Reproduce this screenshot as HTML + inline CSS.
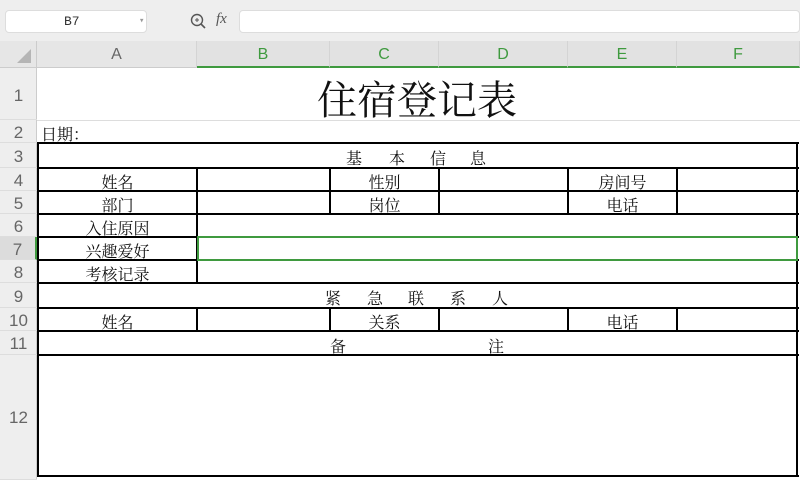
<!DOCTYPE html><html><head><meta charset="utf-8"><style>
body{margin:0;width:800px;height:480px;overflow:hidden;background:#fff;position:relative;font-family:"Liberation Sans","Noto Sans CJK SC",sans-serif}
div{position:absolute;box-sizing:border-box}
.h{height:2px;background:#000}
.v{width:2px;background:#000}
.t{font-family:"Noto Serif CJK SC","Noto Sans CJK SC",serif;font-size:16px;line-height:16px;color:#111;white-space:nowrap}
.c{text-align:center}
.rh{left:0;width:37px;text-align:center;color:#666;font-size:17px;border-bottom:1px solid #ddd}
.ch{top:41px;height:27px;line-height:27px;text-align:center;color:#666;font-size:16px;border-right:1px solid #d4d4d4}
.g{background:#e2e2e2}
</style></head><body>
<div style="left:0;top:0;width:800px;height:41px;background:#eeeeee"></div>
<div style="left:5px;top:10px;width:142px;height:23px;background:#fff;border-radius:4px;border:1px solid #ddd;font-size:13px;line-height:21px;padding-left:58px;color:#333;font-family:'Liberation Mono',monospace">B7<span style="position:absolute;left:133px;color:#999;font-size:9px">▾</span></div>
<svg style="position:absolute;left:190px;top:13px" width="18" height="18"><circle cx="7" cy="7" r="5.5" fill="none" stroke="#555" stroke-width="1.4"/><path d="M11 11l4 4" stroke="#555" stroke-width="1.6"/><path d="M5 7h4M7 5v4" stroke="#555" stroke-width="1"/></svg>
<div style="left:216px;top:11px;font-size:15px;font-style:italic;color:#555;font-family:'Liberation Serif',serif">fx</div>
<div style="left:239px;top:10px;width:561px;height:23px;background:#fff;border-radius:4px;border:1px solid #ddd"></div>
<div style="left:0;top:41px;width:800px;height:27px;background:#e6e6e6;border-bottom:1px solid #ccc"></div>
<div style="left:0;top:41px;width:37px;height:27px;border-right:1px solid #ccc"></div>
<svg style="position:absolute;left:16px;top:48px" width="16" height="16"><path d="M15 1V15H1Z" fill="#b5b5b5"/></svg>
<div class="ch" style="left:37px;width:160px">A</div>
<div class="ch g" style="left:197px;width:133px;color:#3f9a3f;border-bottom:2px solid #3f9a3f">B</div>
<div class="ch g" style="left:330px;width:109px;color:#3f9a3f;border-bottom:2px solid #3f9a3f">C</div>
<div class="ch g" style="left:439px;width:129px;color:#3f9a3f;border-bottom:2px solid #3f9a3f">D</div>
<div class="ch g" style="left:568px;width:109px;color:#3f9a3f;border-bottom:2px solid #3f9a3f">E</div>
<div class="ch g" style="left:677px;width:123px;color:#3f9a3f;border-bottom:2px solid #3f9a3f">F</div>
<div style="left:0;top:68px;width:37px;height:412px;background:#eeeeee;border-right:1px solid #ccc"></div>
<div class="rh" style="top:68px;height:52px;line-height:56px">1</div>
<div class="rh" style="top:120px;height:23px;line-height:26px">2</div>
<div class="rh" style="top:143px;height:25px;line-height:27px">3</div>
<div class="rh" style="top:168px;height:23px;line-height:26px">4</div>
<div class="rh" style="top:191px;height:23px;line-height:26px">5</div>
<div class="rh" style="top:214px;height:23px;line-height:26px">6</div>
<div class="rh" style="top:237px;height:23px;line-height:26px;background:#dcdcdc;border-right:2px solid #3f9a3f">7</div>
<div class="rh" style="top:260px;height:23px;line-height:26px">8</div>
<div class="rh" style="top:283px;height:25px;line-height:27px">9</div>
<div class="rh" style="top:308px;height:23px;line-height:26px">10</div>
<div class="rh" style="top:331px;height:24px;line-height:26px">11</div>
<div class="rh" style="top:355px;height:125px;line-height:125px">12</div>
<div style="left:37px;top:120px;width:763px;height:1px;background:#ddd"></div>
<div class="t" style="left:317px;top:77px;font-size:40px;line-height:42px">住宿登记表</div>
<div class="t" style="left:41px;top:126px">日期：</div>
<div class="h" style="left:37px;top:142px;width:762px"></div>
<div class="h" style="left:37px;top:167px;width:762px"></div>
<div class="h" style="left:37px;top:190px;width:762px"></div>
<div class="h" style="left:37px;top:213px;width:762px"></div>
<div class="h" style="left:37px;top:236px;width:762px"></div>
<div class="h" style="left:37px;top:259px;width:762px"></div>
<div class="h" style="left:37px;top:282px;width:762px"></div>
<div class="h" style="left:37px;top:307px;width:762px"></div>
<div class="h" style="left:37px;top:330px;width:762px"></div>
<div class="h" style="left:37px;top:354px;width:762px"></div>
<div class="h" style="left:37px;top:475px;width:762px"></div>
<div class="v" style="left:37px;top:142px;height:335px"></div>
<div class="v" style="left:796px;top:142px;height:335px"></div>
<div class="v" style="left:196px;top:167px;height:116px"></div>
<div class="v" style="left:196px;top:307px;height:24px"></div>
<div class="v" style="left:329px;top:167px;height:47px"></div>
<div class="v" style="left:438px;top:167px;height:47px"></div>
<div class="v" style="left:567px;top:167px;height:47px"></div>
<div class="v" style="left:676px;top:167px;height:47px"></div>
<div class="v" style="left:329px;top:307px;height:24px"></div>
<div class="v" style="left:438px;top:307px;height:24px"></div>
<div class="v" style="left:567px;top:307px;height:24px"></div>
<div class="v" style="left:676px;top:307px;height:24px"></div>
<div style="left:197px;top:236px;width:601px;height:25px;border:2px solid #3f9a3f"></div>
<div class="t" style="left:346px;top:150px">基</div><div class="t" style="left:389px;top:150px">本</div><div class="t" style="left:430px;top:150px">信</div><div class="t" style="left:470px;top:150px">息</div>
<div class="t c" style="left:39px;width:157px;top:174px">姓名</div>
<div class="t c" style="left:331px;width:107px;top:174px">性别</div>
<div class="t c" style="left:569px;width:107px;top:174px">房间号</div>
<div class="t c" style="left:39px;width:157px;top:197px">部门</div>
<div class="t c" style="left:331px;width:107px;top:197px">岗位</div>
<div class="t c" style="left:569px;width:107px;top:197px">电话</div>
<div class="t c" style="left:39px;width:157px;top:220px">入住原因</div>
<div class="t c" style="left:39px;width:157px;top:243px">兴趣爱好</div>
<div class="t c" style="left:39px;width:157px;top:266px">考核记录</div>
<div class="t" style="left:325px;top:290px">紧</div><div class="t" style="left:367px;top:290px">急</div><div class="t" style="left:408px;top:290px">联</div><div class="t" style="left:450px;top:290px">系</div><div class="t" style="left:492px;top:290px">人</div>
<div class="t c" style="left:39px;width:157px;top:314px">姓名</div>
<div class="t c" style="left:331px;width:107px;top:314px">关系</div>
<div class="t c" style="left:569px;width:107px;top:314px">电话</div>
<div class="t" style="left:330px;top:338px">备</div><div class="t" style="left:488px;top:338px">注</div>
</body></html>
